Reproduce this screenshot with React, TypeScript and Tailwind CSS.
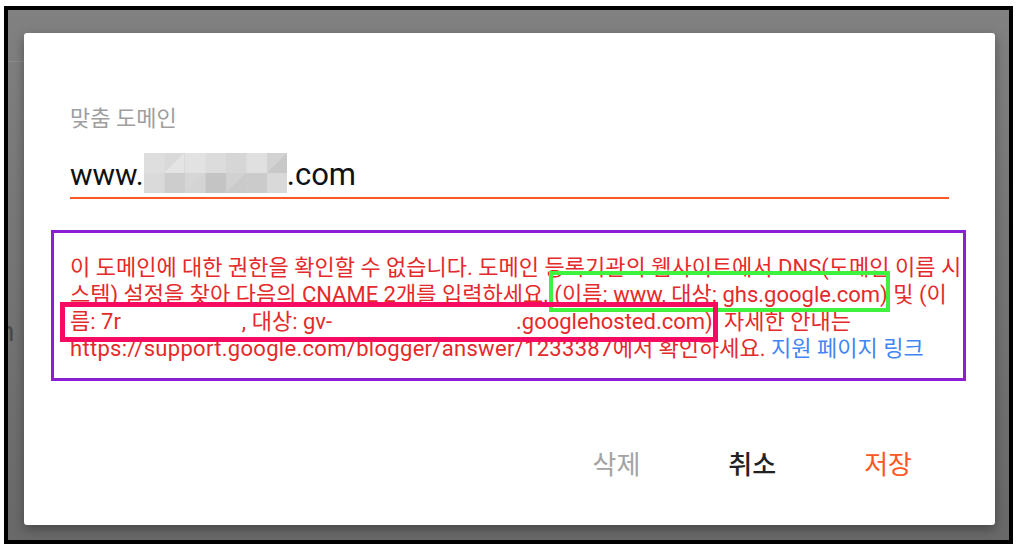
import React from 'react';

// Blurred (pixelated) part of the domain name
function Mosaic() {
  const top = ['#dedede', '#d9d9d9', '#e2e2e2', '#dcdcdc', '#d6d6d6', '#e0e0e0', '#d2d2d2'];
  const bottom = ['#dadada', '#cdcdcd', '#d6d6d6', '#c4c4c4', '#d1d1d1', '#cbcbcb', '#d9d9d9'];
  return (
    <svg width="143" height="40" viewBox="0 0 143 40" className="block shrink-0">
      {top.map((c, i) => (
        <rect key={'t' + i} x={i * 20.5} y={0} width={21} height={20} fill={c} />
      ))}
      {bottom.map((c, i) => (
        <rect key={'b' + i} x={i * 20.5} y={20} width={21} height={20} fill={c} />
      ))}
      <polygon points="41,40 61,20 61,40" fill="#d4d4d4" />
      <polygon points="82,40 102,20 102,40" fill="#cacaca" />
      <polygon points="123,20 143,0 143,20" fill="#c8c8c8" />
      <polygon points="20,20 40,0 40,20" fill="#e4e4e4" />
    </svg>
  );
}

export default function App() {
  const font = { fontFamily: 'Roboto, "Noto Sans CJK KR", sans-serif' };

  return (
    <div className="relative w-[1022px] h-[556px] bg-white pt-[6px] pl-[4px] overflow-hidden" style={font}>
      {/* 배경 (어두운 오버레이) */}
      <div className="flex w-[1009px] h-[538px] border-4 border-black bg-gradient-to-b from-[#818181] to-[#696969]">
        <div className="w-[16px] shrink-0 overflow-hidden">
          <div className="mt-[51px] h-px bg-[#8c8c8c]" />
          <div className="mt-[256px] -ml-[9px] text-[28px] leading-[28px] text-[#4a4a4a]">n</div>
        </div>

        {/* 다이얼로그 */}
        <div className="mt-[23px] w-[971px] h-[492px] shrink-0 rounded-[3px] bg-white shadow-[0_4px_12px_rgba(0,0,0,0.35)] flex flex-col">
          <div className="px-[46px] pt-[73px]">
            <div className="text-[22px] leading-[26px] text-[#9e9e9e]">맞춤 도메인</div>

            <div className="mt-[21px] flex items-end border-b-2 border-[#ff5722] pb-[4px]">
              <span className="text-[30px] leading-[36px] text-[#111]">www.</span>
              <Mosaic />
              <span className="text-[31px] leading-[36px] text-[#111]">.com</span>
            </div>

            <div className="mt-[55px] text-[22px] leading-[27px] text-[#e42a2a] whitespace-nowrap">
              <div>이 도메인에 대한 권한을 확인할 수 없습니다. 도메인 등록기관의 웹사이트에서 DNS(도메인 이름 시</div>
              <div>스템) 설정을 찾아 다음의 CNAME 2개를 입력하세요. (이름: www, 대상: ghs.google.com) 및 (이</div>
              <div>
                름: 7r<span className="inline-block w-[121px]" />, 대상: gv-<span className="inline-block w-[184px]" />.googlehosted.com). 자세한 안내는
              </div>
              <div>
                <span className="tracking-[0.3px]">https://support.google.com/blogger/answer/1233387</span>에서 확인하세요.{' '}
                <span className="text-[#4285f4]">지원 페이지 링크</span>
              </div>
            </div>
          </div>

          <div className="mt-auto mb-[44px] flex justify-end pr-[39px] text-[26px] leading-[32px]">
            <button className="px-[44px] text-[#a3a3a3]">삭제</button>
            <button className="px-[44px] font-medium text-[#222]">취소</button>
            <button className="px-[44px] text-[#ff5722]">저장</button>
          </div>
        </div>
      </div>

      {/* 주석 박스 */}
      <div className="absolute left-[51px] top-[230px] w-[915px] h-[151px] border-[3px] border-[#8a1fd6]" />
      <div className="absolute left-[549px] top-[271px] w-[341px] h-[41px] border-4 border-[#3ef23e]" />
      <div className="absolute left-[60px] top-[302px] w-[658px] h-[40px] border-[5px] border-[#f70a62]" />
    </div>
  );
}
